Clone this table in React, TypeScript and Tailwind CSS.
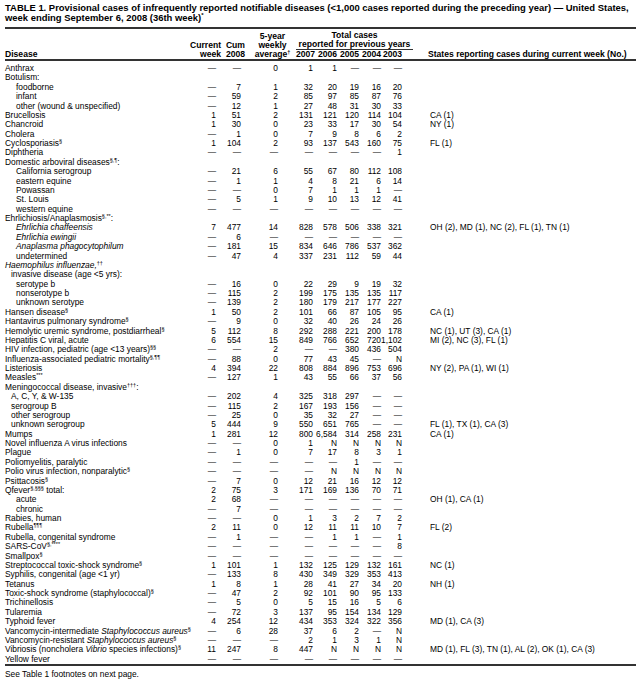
import type { ReactNode } from "react";

type Row = {
  name: ReactNode;
  indent?: 0 | 1 | 2;
  vals?: string[];
  states?: string;
};

const D = "—";

// small raised footnote marks, kept inside the row box
const S = ({ children }: { children: ReactNode }) => (
  <span className="relative top-[-1px] align-top text-[5.5px] leading-[6px]">{children}</span>
);

const rows: Row[] = [
  { name: "Anthrax", vals: [D, D, "0", "1", "1", D, D, D] },
  { name: "Botulism:" },
  { name: "foodborne", indent: 2, vals: [D, "7", "1", "32", "20", "19", "16", "20"] },
  { name: "infant", indent: 2, vals: [D, "59", "2", "85", "97", "85", "87", "76"] },
  { name: "other (wound & unspecified)", indent: 2, vals: [D, "12", "1", "27", "48", "31", "30", "33"] },
  { name: "Brucellosis", vals: ["1", "51", "2", "131", "121", "120", "114", "104"], states: "CA (1)" },
  { name: "Chancroid", vals: ["1", "30", "0", "23", "33", "17", "30", "54"], states: "NY (1)" },
  { name: "Cholera", vals: [D, "1", "0", "7", "9", "8", "6", "2"] },
  { name: <>Cyclosporiasis<S>§</S></>, vals: ["1", "104", "2", "93", "137", "543", "160", "75"], states: "FL (1)" },
  { name: "Diphtheria", vals: [D, D, D, D, D, D, D, "1"] },
  { name: <>Domestic arboviral diseases<S>§,¶</S>:</> },
  { name: "California serogroup", indent: 2, vals: [D, "21", "6", "55", "67", "80", "112", "108"] },
  { name: "eastern equine", indent: 2, vals: [D, "1", "1", "4", "8", "21", "6", "14"] },
  { name: "Powassan", indent: 2, vals: [D, D, "0", "7", "1", "1", "1", D] },
  { name: "St. Louis", indent: 2, vals: [D, "5", "1", "9", "10", "13", "12", "41"] },
  { name: "western equine", indent: 2, vals: [D, D, D, D, D, D, D, D] },
  { name: <>Ehrlichiosis/Anaplasmosis<S>§,**</S>:</> },
  {
    name: <i>Ehrlichia chaffeensis</i>,
    indent: 2,
    vals: ["7", "477", "14", "828", "578", "506", "338", "321"],
    states: "OH (2), MD (1), NC (2), FL (1), TN (1)",
  },
  { name: <i>Ehrlichia ewingii</i>, indent: 2, vals: [D, "6", D, D, D, D, D, D] },
  { name: <i>Anaplasma phagocytophilum</i>, indent: 2, vals: [D, "181", "15", "834", "646", "786", "537", "362"] },
  { name: "undetermined", indent: 2, vals: [D, "47", "4", "337", "231", "112", "59", "44"] },
  { name: <><i>Haemophilus influenzae,</i><S>††</S></> },
  { name: "invasive disease (age <5 yrs):", indent: 1 },
  { name: "serotype b", indent: 2, vals: [D, "16", "0", "22", "29", "9", "19", "32"] },
  { name: "nonserotype b", indent: 2, vals: [D, "115", "2", "199", "175", "135", "135", "117"] },
  { name: "unknown serotype", indent: 2, vals: [D, "139", "2", "180", "179", "217", "177", "227"] },
  { name: <>Hansen disease<S>§</S></>, vals: ["1", "50", "2", "101", "66", "87", "105", "95"], states: "CA (1)" },
  { name: <>Hantavirus pulmonary syndrome<S>§</S></>, vals: [D, "9", "0", "32", "40", "26", "24", "26"] },
  {
    name: <>Hemolytic uremic syndrome, postdiarrheal<S>§</S></>,
    vals: ["5", "112", "8", "292", "288", "221", "200", "178"],
    states: "NC (1), UT (3), CA (1)",
  },
  {
    name: "Hepatitis C viral, acute",
    vals: ["6", "554", "15", "849", "766", "652", "720", "1,102"],
    states: "MI (2), NC (3), FL (1)",
  },
  { name: <>HIV infection, pediatric (age &lt;13 years)<S>§§</S></>, vals: [D, D, "2", D, D, "380", "436", "504"] },
  { name: <>Influenza-associated pediatric mortality<S>§,¶¶</S></>, vals: [D, "88", "0", "77", "43", "45", D, "N"] },
  {
    name: "Listeriosis",
    vals: ["4", "394", "22", "808", "884", "896", "753", "696"],
    states: "NY (2), PA (1), WI (1)",
  },
  { name: <>Measles<S>***</S></>, vals: [D, "127", "1", "43", "55", "66", "37", "56"] },
  { name: <>Meningococcal disease, invasive<S>†††</S>:</> },
  { name: "A, C, Y, & W-135", indent: 1, vals: [D, "202", "4", "325", "318", "297", D, D] },
  { name: "serogroup B", indent: 1, vals: [D, "115", "2", "167", "193", "156", D, D] },
  { name: "other serogroup", indent: 1, vals: [D, "25", "0", "35", "32", "27", D, D] },
  {
    name: "unknown serogroup",
    indent: 1,
    vals: ["5", "444", "9", "550", "651", "765", D, D],
    states: "FL (1), TX (1), CA (3)",
  },
  { name: "Mumps", vals: ["1", "281", "12", "800", "6,584", "314", "258", "231"], states: "CA (1)" },
  { name: "Novel influenza A virus infections", vals: [D, D, "0", "1", "N", "N", "N", "N"] },
  { name: "Plague", vals: [D, "1", "0", "7", "17", "8", "3", "1"] },
  { name: "Poliomyelitis, paralytic", vals: [D, D, D, D, D, "1", D, D] },
  { name: <>Polio virus infection, nonparalytic<S>§</S></>, vals: [D, D, D, D, "N", "N", "N", "N"] },
  { name: <>Psittacosis<S>§</S></>, vals: [D, "7", "0", "12", "21", "16", "12", "12"] },
  { name: <>Qfever<S>§,§§§</S> total:</>, vals: ["2", "75", "3", "171", "169", "136", "70", "71"] },
  { name: "acute", indent: 2, vals: ["2", "68", D, D, D, D, D, D], states: "OH (1), CA (1)" },
  { name: "chronic", indent: 2, vals: [D, "7", D, D, D, D, D, D] },
  { name: "Rabies, human", vals: [D, D, "0", "1", "3", "2", "7", "2"] },
  { name: <>Rubella<S>¶¶¶</S></>, vals: ["2", "11", "0", "12", "11", "11", "10", "7"], states: "FL (2)" },
  { name: "Rubella, congenital syndrome", vals: [D, "1", D, D, "1", "1", D, "1"] },
  { name: <>SARS-CoV<S>§,****</S></>, vals: [D, D, D, D, D, D, D, "8"] },
  { name: <>Smallpox<S>§</S></>, vals: [D, D, D, D, D, D, D, D] },
  {
    name: <>Streptococcal toxic-shock syndrome<S>§</S></>,
    vals: ["1", "101", "1", "132", "125", "129", "132", "161"],
    states: "NC (1)",
  },
  { name: "Syphilis, congenital (age <1 yr)", vals: [D, "133", "8", "430", "349", "329", "353", "413"] },
  { name: "Tetanus", vals: ["1", "8", "1", "28", "41", "27", "34", "20"], states: "NH (1)" },
  { name: <>Toxic-shock syndrome (staphylococcal)<S>§</S></>, vals: [D, "47", "2", "92", "101", "90", "95", "133"] },
  { name: "Trichinellosis", vals: [D, "5", "0", "5", "15", "16", "5", "6"] },
  { name: "Tularemia", vals: [D, "72", "3", "137", "95", "154", "134", "129"] },
  {
    name: "Typhoid fever",
    vals: ["4", "254", "12", "434", "353", "324", "322", "356"],
    states: "MD (1), CA (3)",
  },
  {
    name: <>Vancomycin-intermediate <i>Staphylococcus aureus</i><S>§</S></>,
    vals: [D, "6", "28", "37", "6", "2", D, "N"],
  },
  {
    name: <>Vancomycin-resistant <i>Staphylococcus aureus</i><S>§</S></>,
    vals: [D, D, D, "2", "1", "3", "1", "N"],
  },
  {
    name: <>Vibriosis (noncholera <i>Vibrio</i> species infections)<S>§</S></>,
    vals: ["11", "247", "8", "447", "N", "N", "N", "N"],
    states: "MD (1), FL (3), TN (1), AL (2), OK (1), CA (3)",
  },
  { name: "Yellow fever", vals: [D, D, D, D, D, D, D, D] },
];

const cols = "grid grid-cols-[185px_31px_24px_51px_17px_24px_22px_22px_21px_1fr]";
const valPad = ["pr-[5px]", "pr-[4px]", "pr-[18px]", "", "", "", "", ""];
const indents = ["", "pl-[6px]", "pl-[11px]"];

function DataRow({ row }: { row: Row }) {
  return (
    <div className={`${cols} h-[9.38px] leading-[9.38px] whitespace-nowrap`}>
      <div className={indents[row.indent ?? 0]}>{row.name}</div>
      {Array.from({ length: 8 }).map((_, i) => (
        <div key={i} className={`text-right ${valPad[i]}`}>
          {row.vals ? row.vals[i] : ""}
        </div>
      ))}
      <div className="pl-[28px]">{row.states ?? ""}</div>
    </div>
  );
}

export default function App() {
  return (
    <div className="w-[641px] h-[682px] bg-white px-[5px] pt-[3px] text-black font-['Liberation_Sans',Arial,sans-serif] overflow-hidden">
      <div className="text-[9.45px] font-bold leading-[10px] whitespace-nowrap">
        <div>
          TABLE 1. Provisional cases of infrequently reported notifiable diseases (&lt;1,000 cases reported during the
          preceding year) — United States,
        </div>
        <div>
          week ending September 6, 2008 (36th week)
          <span className="relative top-[-1px] align-top text-[6px] leading-[6px]">*</span>
        </div>
      </div>

      <div className="mt-[4px] border-t-2 border-b-2 border-[#333] pt-[2px] text-[8.6px] font-bold leading-[9px] whitespace-nowrap">
        <div className={`${cols} items-end`}>
          <div>Disease</div>
          <div className="text-right">
            <div>Current</div>
            <div>week</div>
          </div>
          <div className="text-right">
            <div>Cum</div>
            <div>2008</div>
          </div>
          <div className="text-center pl-[4px]">
            <div>5-year</div>
            <div>weekly</div>
            <div>
              average<span className="relative top-[-1px] align-top text-[5.5px] leading-[6px]">†</span>
            </div>
          </div>
          <div className="col-span-5 mr-[-11px]">
            <div className="text-center">Total cases</div>
            <div className="text-center border-b border-[#333] leading-[8px] pb-[1px]">reported for previous years</div>
            <div className="grid grid-cols-[17px_24px_22px_22px_21px] mr-[11px]">
              <div className="text-right">2007</div>
              <div className="text-right">2006</div>
              <div className="text-right">2005</div>
              <div className="text-right">2004</div>
              <div className="text-right">2003</div>
            </div>
          </div>
          <div className="pl-[26px]">States reporting cases during current week (No.)</div>
        </div>
      </div>

      <div className="pt-[3px] border-b-2 border-[#333] text-[8.4px]">
        {rows.map((r, i) => (
          <DataRow key={i} row={r} />
        ))}
      </div>

      <div className="mt-[3px] text-[8.4px] leading-[10px]">See Table 1 footnotes on next page.</div>
    </div>
  );
}
